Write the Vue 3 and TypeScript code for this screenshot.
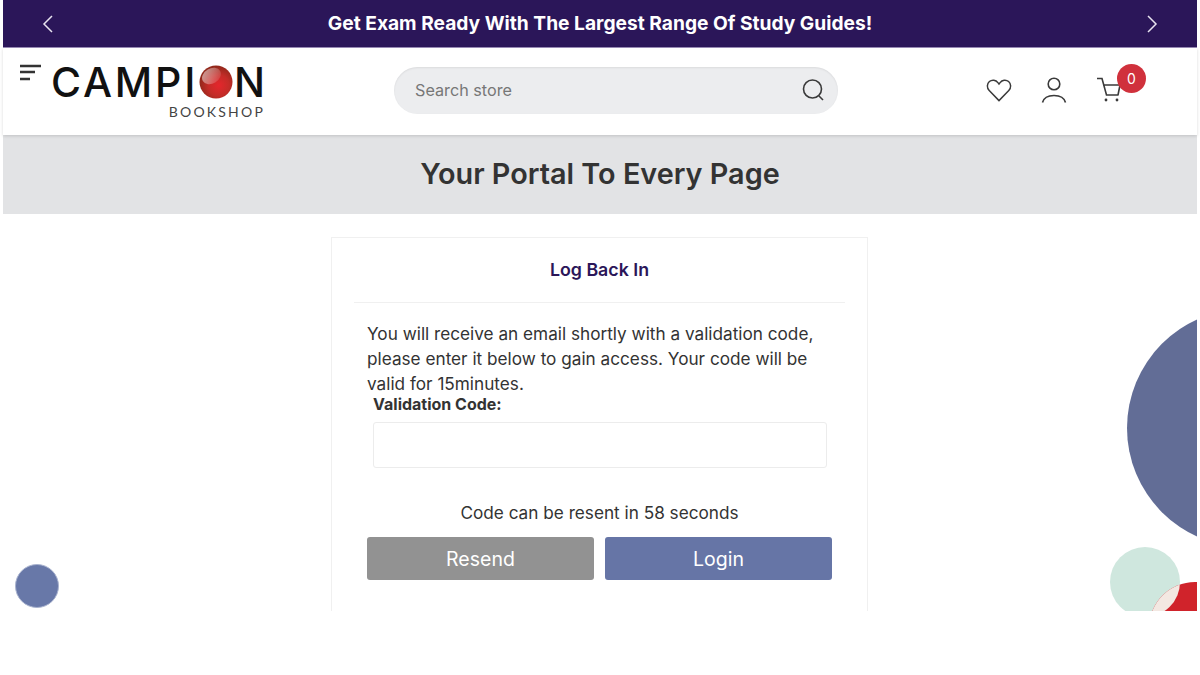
<script setup lang="ts">
const brand: string = 'BOOKSHOP'
</script>

<template>
  <div class="page">
    <div class="promo">
      <svg class="chev" width="12" height="18" viewBox="0 0 12 18"><path d="M10 1 2 9l8 8" /></svg>
      <span class="promo-text">Get Exam Ready With The Largest Range Of Study Guides!</span>
      <svg class="chev" width="12" height="18" viewBox="0 0 12 18"><path d="M2 1l8 8-8 8" /></svg>
    </div>
    <header class="header">
      <div class="brand">
        <svg class="burger" width="23" height="17" viewBox="0 0 23 17"><path d="M1 2h21M1 8h15M1 15h10" /></svg>
        <div class="logo">
          <div class="wordmark">
            <span>CAMPI</span>
            <svg class="ball" width="34" height="34" viewBox="0 0 34 34">
              <defs>
                <radialGradient id="ballFill" cx="0.58" cy="0.6" r="0.58">
                  <stop offset="0" stop-color="#e5262c" />
                  <stop offset="0.55" stop-color="#c42c28" />
                  <stop offset="1" stop-color="#92281b" />
                </radialGradient>
                <linearGradient id="ballGloss" x1="0" y1="0" x2="1" y2="1">
                  <stop offset="0" stop-color="#fff" stop-opacity="0.6" />
                  <stop offset="1" stop-color="#fff" stop-opacity="0.03" />
                </linearGradient>
              </defs>
              <circle cx="17" cy="17" r="16.5" fill="url(#ballFill)" />
              <ellipse cx="12.500" cy="11" rx="10" ry="7.500" fill="url(#ballGloss)" transform="rotate(-30 12.500 11)" />
            </svg>
            <span>N</span>
          </div>
          <div class="sub">{{ brand }}</div>
        </div>
      </div>
      <div class="search">
        <span class="placeholder">Search store</span>
        <svg width="24" height="24" viewBox="0 0 24 24" class="ico"><circle cx="10.500" cy="10" r="9" /><path d="M17 17l4 4" /></svg>
      </div>
      <div class="actions">
        <svg width="26" height="24" viewBox="0 0 28 26" class="ico heart"><path d="M14 24.500 3.400 13.600C.6 10.700.8 6.200 3.600 3.800c2.900-2.400 7-1.700 9.200 1.200L14 6.600 15.200 5c2.200-2.900 6.300-3.600 9.200-1.200 2.800 2.400 3 6.900.2 9.800Z" /></svg>
        <svg width="26" height="27" viewBox="0 0 26 27" class="ico user"><circle cx="13" cy="8" r="5.800" /><path d="M1.500 26.500c1.200-4.500 5.800-7 11.500-7s10.300 2.500 11.500 7" /></svg>
        <div class="cart">
          <svg width="26" height="26" viewBox="0 0 26 26" class="ico"><path d="M1 1.500h5l4.500 16.500h12M7 8h17l-2 10" /><circle cx="10" cy="23" r="1.400" class="dot" /><circle cx="21" cy="23" r="1.400" class="dot" /></svg>
          <span class="badge">0</span>
        </div>
      </div>
    </header>
    <div class="hero"><h1>Your Portal To Every Page</h1></div>
    <main class="main">
      <svg class="deco" width="130" height="397" viewBox="1067 214 130 397">
        <defs>
          <clipPath id="greenClip"><circle cx="1145" cy="582" r="35" /></clipPath>
        </defs>
        <circle cx="1246" cy="428" r="119" fill="#626d96" />
        <circle cx="1145" cy="582" r="35" fill="#cfe7de" />
        <circle cx="1195" cy="628" r="46" fill="#d0232b" />
        <circle cx="1195" cy="628" r="46" fill="#f3e8e2" clip-path="url(#greenClip)" />
      </svg>
      <span class="fab"></span>
      <section class="card">
        <h2>Log Back In</h2>
        <div class="body">
          <p class="intro">You will receive an email shortly with a validation code, please enter it below to gain access. Your code will be valid for 15minutes.</p>
          <label class="label">Validation Code:</label>
          <div class="input"></div>
          <p class="timer">Code can be resent in 58 seconds</p>
          <div class="buttons">
            <button class="btn resend">Resend</button>
            <button class="btn login">Login</button>
          </div>
        </div>
      </section>
    </main>
  </div>
</template>

<style>
html, body { margin: 0; background: #fff; }
</style>

<style scoped>
.page {
  width: 1200px;
  height: 675px;
  padding: 0 3px;
  box-sizing: border-box;
  font-family: Inter, "Open Sans", sans-serif;
  color: #333;
  overflow: hidden;
}
.promo {
  height: 48px;
  background: #2b1659;
  display: flex;
  align-items: center;
  justify-content: space-between;
  padding: 0 39px;
  border-bottom: 1px solid #9a8cb8;
  box-sizing: border-box;
}
.promo-text { color: #fff; font-weight: 700; font-size: 19.2px; margin-bottom: 2px; }
.chev path { fill: none; stroke: #e8e4f0; stroke-width: 1.5; }
.header {
  height: 87px;
  display: flex;
  align-items: flex-start;
  position: relative;
  z-index: 1;
  box-shadow: 0 1px 3px rgba(0,0,0,.15);
}
.brand { display: flex; width: 391px; padding: 16px 0 0 16px; box-sizing: border-box; }
.burger path { fill: none; stroke: #333; stroke-width: 2.4; }
.logo { margin-left: 9px; width: 214px; flex-shrink: 0; display: flex; flex-direction: column; align-items: flex-end; }
.wordmark {
  width: 100%;
  display: flex;
  align-items: center;
  font-family: Inter, sans-serif;
  font-weight: 500;
  font-size: 41px;
  line-height: 36px;
  letter-spacing: 2.800px;
  color: #111;
}
.wordmark span:last-child { letter-spacing: 0; margin-left: auto; }
.sub { font-family: Lato, sans-serif; font-size: 14px; letter-spacing: 2.2px; color: #444; line-height: 16px; margin-top: 4px; }
.ball { margin-left: 1px; }
.search {
  margin-top: 19px;
  width: 444px;
  height: 47px;
  border-radius: 24px;
  background: #ecedef;
  box-shadow: inset 0 1px 2px rgba(0,0,0,.08);
  display: flex;
  align-items: center;
  justify-content: space-between;
  padding: 0 12px 0 21px;
  box-sizing: border-box;
}
.placeholder { font-size: 16.2px; color: #777; margin-bottom: 2px; }
.ico { fill: none; stroke: #3a3a3a; stroke-width: 1.6; }
.dot { fill: #3a3a3a; stroke: none; }
.actions { display: flex; margin-left: 148px; margin-top: 28px; gap: 29px; align-items: flex-start; }
.heart { margin-top: 2px; }
.cart { position: relative; margin-top: 1px; width: 26px; height: 26px; }
.badge {
  position: absolute;
  left: 21px;
  top: -13px;
  width: 29px;
  height: 29px;
  border-radius: 50%;
  background: #d0313c;
  color: #fff;
  font-size: 14px;
  display: flex;
  align-items: center;
  justify-content: center;
}
.hero {
  height: 79px;
  background: #e2e3e5;
  display: flex;
  align-items: center;
  justify-content: center;
}
.hero h1 { margin: 0 0 2px; font-size: 28.800px; font-weight: 600; color: #333; }
.main {
  position: relative;
  height: 397px;
  overflow: hidden;
  padding-top: 23px;
  box-sizing: border-box;
}
.deco { position: absolute; right: 0; top: 0; }
.fab {
  position: absolute;
  left: 12px;
  top: 350px;
  width: 44px;
  height: 44px;
  border-radius: 50%;
  background: #6878a8;
  box-sizing: border-box;
  border: 1px solid #a9b3cf;
}
.card {
  position: relative;
  width: 537px;
  margin-left: 328px;
  height: 420px;
  border: 1px solid #f0f0f0;
  box-sizing: border-box;
  padding: 0 22px;
}
.card h2 {
  margin: 0;
  height: 64px;
  line-height: 64px;
  text-align: center;
  font-size: 17.800px;
  font-weight: 600;
  color: #2b1659;
  border-bottom: 1px solid #f0f0f0;
}
.body { padding: 18px 13px 0; }
.intro { margin: 0; font-size: 17.200px; line-height: 25px; color: #333; }
.label { display: block; margin: -2px 0 0 6px; font-size: 16px; font-weight: 700; line-height: 20px; color: #333; }
.input {
  margin: 8px 5px 0 6px;
  height: 46px;
  box-sizing: border-box;
  border: 1px solid #ececec;
  border-radius: 3px;
}
.timer { margin: 33px 0 0; text-align: center; font-size: 17.200px; line-height: 24px; color: #333; }
.buttons { display: flex; gap: 11px; margin-top: 12px; }
.btn {
  flex: 1;
  height: 43px;
  border: 0;
  border-radius: 3px;
  color: #fff;
  font: 400 19.500px Inter, sans-serif;
}
.resend { background: #929292; }
.login { background: #6675a6; }
</style>
